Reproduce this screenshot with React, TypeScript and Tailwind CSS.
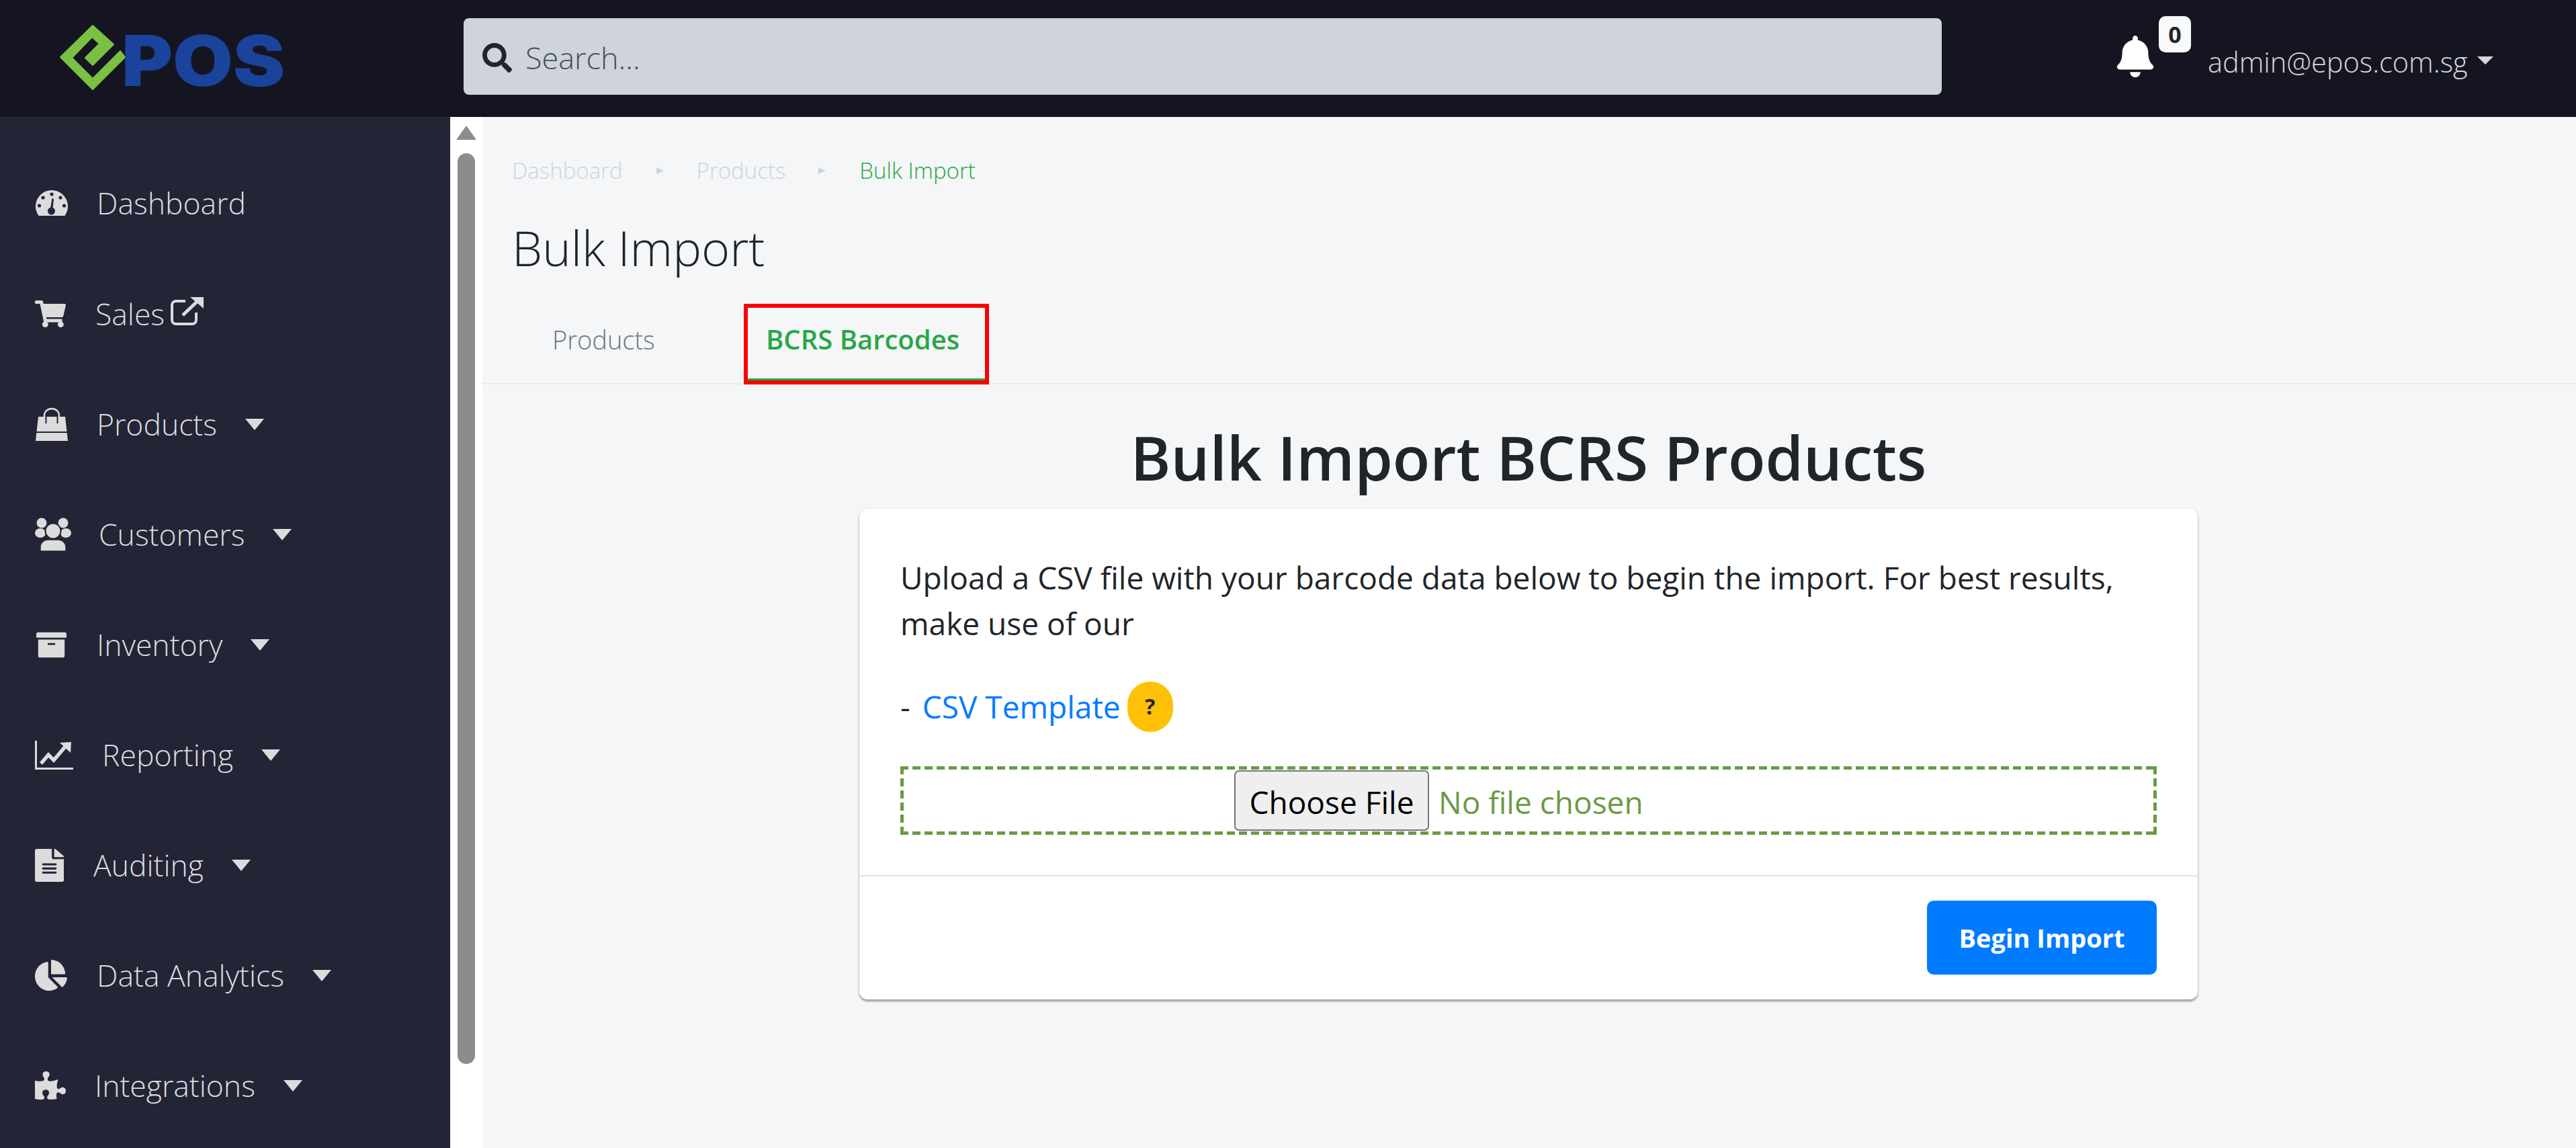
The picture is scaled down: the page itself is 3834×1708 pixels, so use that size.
import {
  FaBell,
  FaSearch,
  FaShoppingCart,
  FaArchive,
  FaFileAlt,
  FaChartPie,
  FaPuzzlePiece,
} from 'react-icons/fa';

// dark fill used for the cut-outs inside the sidebar icons
const SIDE_BG = '#232436';

function GaugeIcon({ className }: { className?: string }) {
  return (
    <svg viewBox="0 0 50 38" className={className} fill="currentColor">
      <path d="M5.5 38 A24 24 0 1 1 44.5 38 Z" />
      <g fill={SIDE_BG}>
        <circle cx="25" cy="6" r="2.6" />
        <circle cx="12" cy="11" r="2.6" />
        <circle cx="38" cy="11" r="2.6" />
        <circle cx="6.5" cy="23" r="2.6" />
        <circle cx="43.5" cy="23" r="2.6" />
        <path d="M25.5 12 L28 13 L26.5 27 L23 27 Z" />
        <circle cx="24.5" cy="31" r="5.5" />
      </g>
    </svg>
  );
}

function BagIcon({ className }: { className?: string }) {
  return (
    <svg viewBox="0 0 50 50" className={className} fill="currentColor">
      <path d="M5 14 H45 L49 50 H1 Z" />
      <path d="M14 22 V12 A11 10 0 0 1 36 12 V22" fill="none" stroke="currentColor" strokeWidth="2.4" />
      <path d="M16.5 14 V24 M33.5 14 V24" stroke={SIDE_BG} strokeWidth="2" />
      <path d="M2 37 H48" stroke={SIDE_BG} strokeWidth="2" />
    </svg>
  );
}

function PeopleIcon({ className }: { className?: string }) {
  return (
    <svg viewBox="0 0 54 50" className={className} fill="currentColor">
      <circle cx="10" cy="8" r="7.5" />
      <circle cx="42" cy="8" r="7.5" />
      <ellipse cx="8" cy="23" rx="8" ry="7" />
      <ellipse cx="46" cy="23" rx="8" ry="7" />
      <circle cx="27" cy="20" r="11.5" stroke={SIDE_BG} strokeWidth="2" />
      <path d="M8 50 V43 A11 11 0 0 1 19 33 H35 A11 11 0 0 1 46 43 V50 Z" stroke={SIDE_BG} strokeWidth="1.5" />
    </svg>
  );
}

function TrendIcon({ className }: { className?: string }) {
  return (
    <svg viewBox="0 0 57 43" className={className} fill="none" stroke="currentColor">
      <path d="M1.5 0 V41.5 H57" strokeWidth="3" />
      <path d="M9 34 L20 21 L28 29 L45 9" strokeWidth="5.5" />
      <path d="M37 3 L54 2 L53 18 Z" fill="currentColor" stroke="none" />
    </svg>
  );
}

function OpenLinkIcon({ className }: { className?: string }) {
  return (
    <svg viewBox="0 0 50 42" className={className} fill="none" stroke="currentColor" strokeWidth="4">
      <path d="M23 6 H9 A6 6 0 0 0 3 12 V34 A6 6 0 0 0 9 40 H33 A6 6 0 0 0 39 34 V23" />
      <path d="M19 27 L41 6" strokeWidth="5" />
      <path d="M30 0 H50 V17 Z" fill="currentColor" stroke="none" />
    </svg>
  );
}

const NAV = [
  { icon: GaugeIcon, size: 'w-[50px] h-[38px]', label: 'Dashboard', textClass: 'ml-[42px]', caret: false, border: true },
  { icon: FaShoppingCart, size: 'w-[46px] h-[40px]', label: 'Sales', textClass: 'ml-[44px]', caret: false, link: true },
  { icon: BagIcon, size: 'w-[50px] h-[50px]', label: 'Products', textClass: 'ml-[42px]', caret: true },
  { icon: PeopleIcon, size: 'w-[54px] h-[50px]', label: 'Customers', textClass: 'ml-[41px]', caret: true },
  { icon: FaArchive, size: 'ml-[2px] w-[45px] h-[43px]', label: 'Inventory', textClass: 'ml-[45px]', caret: true },
  { icon: TrendIcon, size: 'w-[57px] h-[43px]', label: 'Reporting', textClass: 'ml-[43px]', caret: true },
  { icon: FaFileAlt, size: 'w-[43px] h-[49px]', label: 'Auditing', textClass: 'ml-[44px]', caret: true },
  { icon: FaChartPie, size: 'w-[48px] h-[46px]', label: 'Data Analytics', textClass: 'ml-[44px]', caret: true },
  { icon: FaPuzzlePiece, size: 'w-[46px] h-[42px]', label: 'Integrations', textClass: 'ml-[43px]', caret: true },
];

function Logo() {
  return (
    <svg width="350" height="110" viewBox="0 0 350 110" className="ml-[84px] shrink-0 overflow-visible">
      <path
        d="M54 6 L85 34 L54 65 L43 54 L64 33 L53 23 L23 54 L54 85 L95 44 L102 53 L54 101 L6 53 Z"
        fill="#7ac143"
        stroke="#7ac143"
        strokeWidth="2"
        strokeLinejoin="round"
      />
      <text
        x="97"
        y="96"
        fontFamily="Inter, sans-serif"
        fontWeight="900"
        fontSize="104"
        fill="#1a439b"
        textLength="243"
        lengthAdjust="spacingAndGlyphs"
      >
        POS
      </text>
    </svg>
  );
}

function Header() {
  return (
    <header className="flex h-[174px] shrink-0 items-center bg-[#151522]">
      <Logo />
      <div className="mb-[6px] ml-[256px] flex h-[114px] w-[2200px] shrink-0 items-center rounded-[8px] bg-[#ced4da] pl-[28px] pt-[3px]">
        <FaSearch className="h-[44px] w-[44px] text-[#212529]" />
        <span className="ml-[20px] text-[45px] font-light text-[#495057]">Search...</span>
      </div>
      <div className="ml-[260px] flex h-full items-start">
        <FaBell className="mt-[53px] h-[62px] w-[56px] text-white" />
        <span className="ml-[7px] mt-[24px] flex h-[54px] w-[48px] items-center justify-center rounded-[10px] bg-[#f8f9fa] text-[34px] font-bold text-[#212529]">
          0
        </span>
        <span className="ml-[25px] mt-[62px] text-[41.5px] leading-[60px] font-light text-[#d8d8d8]">admin@epos.com.sg</span>
        <span className="ml-[14px] mt-[84px] h-0 w-0 border-x-[12px] border-t-[12px] border-x-transparent border-t-[#d8d8d8]" />
      </div>
    </header>
  );
}

function Sidebar() {
  return (
    <aside className="h-full w-[670px] shrink-0 overflow-hidden bg-[#232436] pt-[47px]">
      {NAV.map((item) => {
        const Icon = item.icon;
        return (
          <div
            key={item.label}
            className={`flex h-[164px] items-center pl-[52px] text-[44.5px] font-light text-[#dcdcdc] ${item.border ? 'border-b-2 border-[#1f2032]' : ''}`}
          >
            <Icon preserveAspectRatio="none" className={`${item.size} shrink-0`} />
            <span className={item.textClass}>{item.label}</span>
            {item.link && <OpenLinkIcon className="mb-[8px] ml-[8px] h-[42px] w-[50px]" />}
            {item.caret && <span className="ml-[42px] h-0 w-0 border-x-[14px] border-t-[17px] border-x-transparent border-t-[#dcdcdc]" />}
          </div>
        );
      })}
    </aside>
  );
}

function Scrollbar() {
  return (
    <div className="flex h-full w-[48px] shrink-0 flex-col items-center bg-white pt-[13px]">
      <span className="h-0 w-0 border-x-[15px] border-b-[21px] border-x-transparent border-b-[#8c8c8c]" />
      <span className="mt-[20px] h-[1355px] w-[26px] rounded-full bg-[#8c8c8c]" />
    </div>
  );
}

function Main() {
  return (
    <main className="min-w-0 flex-1 bg-[#f4f6f8]">
      <div className="pl-[44px] pt-[60px]">
        <div className="flex h-[40px] items-center text-[33px] font-light text-[#ced4da]">
          <span>Dashboard</span>
          <span className="ml-[50px] h-0 w-0 border-y-[5px] border-l-[11px] border-y-transparent border-l-[#ced4da]" />
          <span className="ml-[49px]">Products</span>
          <span className="ml-[49px] h-0 w-0 border-y-[5px] border-l-[11px] border-y-transparent border-l-[#ced4da]" />
          <span className="ml-[50px] text-[#28a745]">Bulk Import</span>
        </div>
        <h1 className="mt-[39px] text-[72px] leading-[110px] font-light text-[#212529]">Bulk Import</h1>
      </div>
      <div className="mt-[29px] flex h-[120px] border-b-2 border-[#e9ecef] pl-[104px]">
        <span className="w-[285px] pt-[25px] text-[38px] font-light text-[#6c757d]">Products</span>
        <div className="h-[120px] w-[365px] border-[6px] border-[#ff0000]">
          <div className="h-[108px] border-b-[3px] border-[#28a745] pl-[27px] pt-[17px] text-[40px] font-semibold text-[#28a745]">
            BCRS Barcodes
          </div>
        </div>
      </div>
      <div className="ml-[561px] w-[1992px]">
        <h2 className="mt-[37px] text-center text-[91px] leading-[142px] font-semibold text-[#212529]">Bulk Import BCRS Products</h2>
        <div className="mt-[6px] h-[730px] rounded-[12px] bg-white shadow-[0_3px_3px_rgba(0,0,0,0.35),0_0_3px_rgba(0,0,0,0.12)]">
          <div className="h-[547px] border-b-2 border-[#dee2e6] px-[61px] pt-[68px]">
            <p className="text-[46px] leading-[68px] text-[#212529]">
              Upload a CSV file with your barcode data below to begin the import. For best results, make use of our
            </p>
            <div className="mt-[52px] flex h-[76px] items-center text-[46px] text-[#212529]">
              <span>-&nbsp;</span>
              <span className="ml-[6px] text-[#007bff]">CSV Template</span>
              <span className="ml-[10px] flex h-[75px] w-[68px] items-center justify-center rounded-full bg-[#ffc107] text-[32px] font-bold">
                ?
              </span>
            </div>
            <div className="mt-[51px] flex h-[102px] items-center bg-no-repeat pl-[497px] [background-image:repeating-linear-gradient(90deg,#6a9b45_0_12px,transparent_12px_18px),repeating-linear-gradient(90deg,#6a9b45_0_12px,transparent_12px_18px),repeating-linear-gradient(0deg,#6a9b45_0_12px,transparent_12px_18px),repeating-linear-gradient(0deg,#6a9b45_0_12px,transparent_12px_18px)] [background-position:0_0,0_100%,0_0,100%_0] [background-size:100%_5px,100%_5px,5px_100%,5px_100%]">
              <button className="flex h-[90px] w-[290px] items-center justify-center rounded-[7px] border-2 border-[#767676] bg-[#efefef] pt-[5px] text-[46px] text-black">
                Choose File
              </button>
              <span className="ml-[14px] pt-[5px] text-[46px] text-[#6a9b45]">No file chosen</span>
            </div>
          </div>
          <div className="flex justify-end px-[61px] pt-[36px]">
            <button className="h-[110px] w-[342px] rounded-[10px] bg-[#007bff] text-[38px] font-bold text-white">Begin Import</button>
          </div>
        </div>
      </div>
    </main>
  );
}

export default function App() {
  return (
    <div className="flex h-[1708px] w-[3834px] flex-col overflow-hidden bg-[#f4f6f8] font-['Open_Sans','Noto_Sans',sans-serif]">
      <Header />
      <div className="flex h-[1534px]">
        <Sidebar />
        <Scrollbar />
        <Main />
      </div>
    </div>
  );
}
